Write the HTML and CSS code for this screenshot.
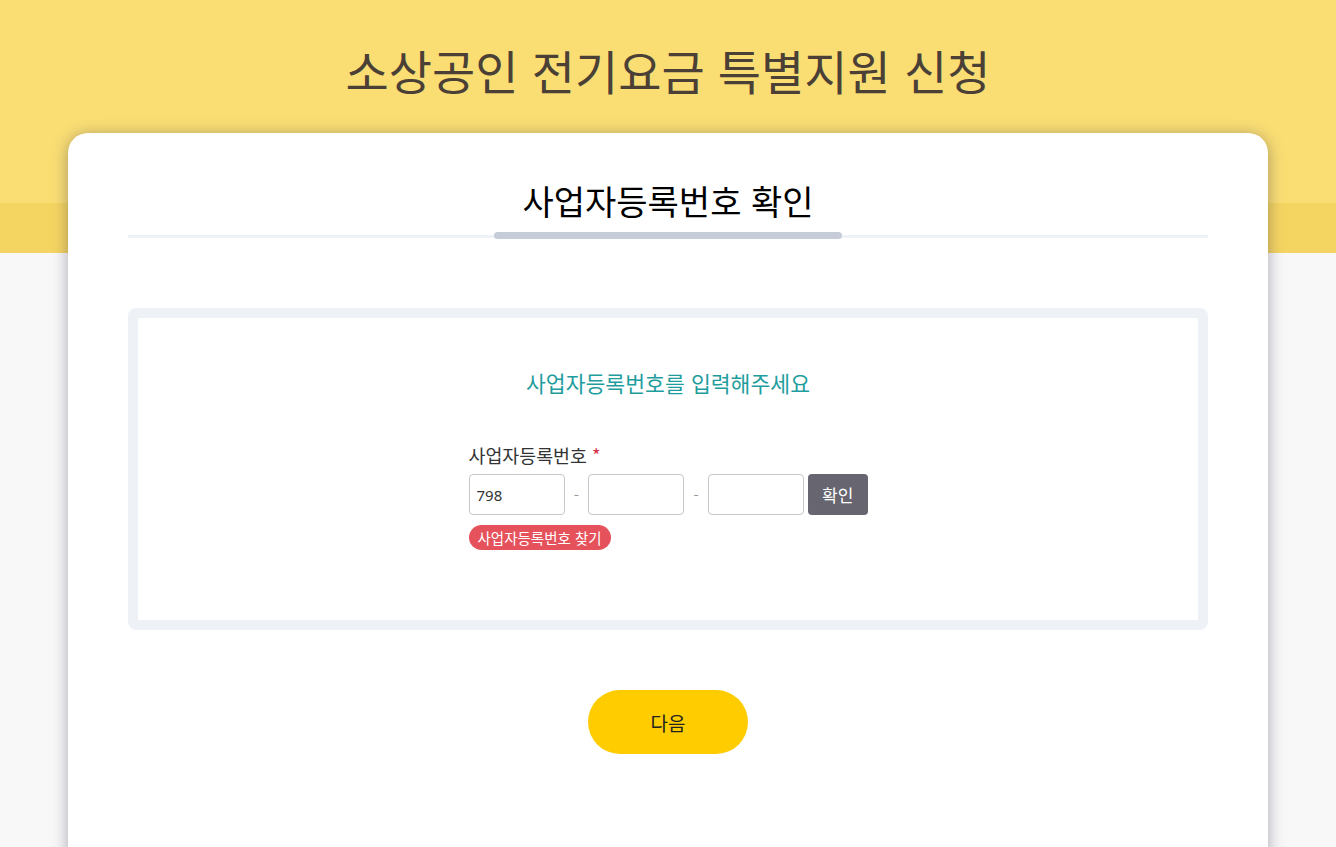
FILE: index.html
```html
<!DOCTYPE html>
<html lang="ko">
<head>
  <meta charset="UTF-8">
  <meta name="viewport" content="width=device-width, initial-scale=1">
  <title>소상공인 전기요금 특별지원 신청</title>
  <link rel="stylesheet" href="styles.css">
</head>
<body>
  <div class="hero">
    <h1>소상공인 전기요금 특별지원 신청</h1>
  </div>
  <div class="hero-band"></div>

  <div class="card">
    <div class="card-title">
      <h2>사업자등록번호 확인</h2>
    </div>

    <div class="box">
      <p class="box-lead">사업자등록번호를 입력해주세요</p>

      <div class="form-group">
        <label class="form-label" for="bizno1">사업자등록번호 <span class="req">*</span></label>
        <div class="bizno-row">
          <input type="text" id="bizno1" class="bizno" value="798">
          <span class="dash">-</span>
          <input type="text" id="bizno2" class="bizno">
          <span class="dash">-</span>
          <input type="text" id="bizno3" class="bizno">
          <button class="btn-check">확인</button>
        </div>
        <a class="pill" href="#">사업자등록번호 찾기</a>
      </div>
    </div>

    <div class="actions">
      <button class="btn-next">다음</button>
    </div>
  </div>
</body>
</html>
```

FILE: styles.css
```css
/* 기본 색상 */
:root {
  --hero-bg: #fade74;
  --hero-band: #f5d562;
  --page-bg: #f8f8f8;
  --title-color: #4a4036;
  --teal: #1f9d9d;
  --line-light: #eef1f5;
  --line-dark: #c6cdd9;
  --box-border: #eef2f7;
  --gray-btn: #67656f;
  --red-pill: #e5525b;
  --yellow-btn: #ffcc00;
}

* {
  box-sizing: border-box;
}

body {
  margin: 0;
  background: var(--page-bg);
  font-family: 'Noto Sans CJK KR', 'Noto Sans', sans-serif;
  color: #333;
  overflow: hidden;
}

.hero {
  height: 203px;
  background: var(--hero-bg);
  padding-top: 36px;
}

.hero h1 {
  margin: 0;
  text-align: center;
  font-size: 47px;
  font-weight: 400;
  line-height: 68px;
  color: var(--title-color);
}

.hero-band {
  height: 50px;
  background: var(--hero-band);
}

.card {
  position: relative;
  width: 1200px;
  margin: -120px auto 0;
  background: #fff;
  border-radius: 20px;
  box-shadow: 0 2px 16px rgba(40, 36, 70, 0.38);
  padding: 42px 60px 140px;
}

.card-title {
  position: relative;
  text-align: center;
  border-bottom: 3px solid var(--line-light);
  padding-bottom: 8px;
}

.card-title h2 {
  margin: 0;
  font-size: 34px;
  font-weight: 400;
  line-height: 52px;
  color: #000;
}

.card-title::after {
  content: "";
  position: absolute;
  left: 50%;
  bottom: -4px;
  width: 348px;
  height: 7px;
  margin-left: -174px;
  background: var(--line-dark);
  border-radius: 4px;
}

.box {
  margin-top: 70px;
  border: 10px solid var(--box-border);
  border-radius: 8px;
  padding: 49px 0 70px;
}

.box-lead {
  margin: 0;
  text-align: center;
  font-size: 21.6px;
  line-height: 32px;
  color: var(--teal);
}

.form-group {
  width: 399px;
  margin: 43px auto 0;
}

.form-label {
  display: block;
  font-size: 18.4px;
  line-height: 26px;
  color: #333;
}

.req {
  color: #d9304a;
}

.bizno-row {
  display: flex;
  align-items: center;
  margin-top: 6px;
}

.bizno {
  width: 96px;
  height: 41px;
  border: 1px solid #c8c8c8;
  border-radius: 4px;
  padding: 0 7px;
  font-family: 'Noto Sans', sans-serif;
  font-size: 15px;
  color: #333;
}

.dash {
  width: 24px;
  text-align: center;
  font-size: 15px;
  color: #999;
}

.btn-check {
  margin-left: 4px;
  height: 41px;
  width: 60px;
  border: none;
  border-radius: 4px;
  background: var(--gray-btn);
  color: #fff;
  font-family: inherit;
  font-size: 17px;
}

.pill {
  display: inline-block;
  margin-top: 10px;
  padding: 0 9px;
  height: 25px;
  line-height: 25px;
  border-radius: 13px;
  background: var(--red-pill);
  color: #fff;
  font-size: 14.5px;
  text-decoration: none;
}

.actions {
  text-align: center;
  margin-top: 60px;
}

.btn-next {
  width: 160px;
  height: 64px;
  border: none;
  border-radius: 32px;
  background: var(--yellow-btn);
  color: #222;
  font-family: inherit;
  font-size: 19px;
}
```
